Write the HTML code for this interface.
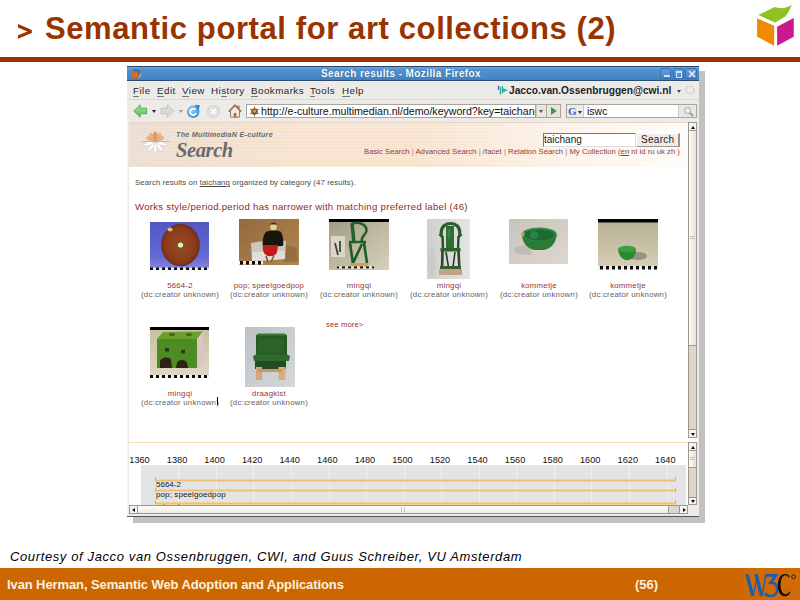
<!DOCTYPE html>
<html><head><meta charset="utf-8">
<style>
*{margin:0;padding:0;box-sizing:border-box}
html,body{width:800px;height:600px;overflow:hidden;background:#fff;font-family:"Liberation Sans",sans-serif}
.abs{position:absolute}
#title{position:absolute;left:45px;top:10.6px;font-size:31px;font-weight:bold;color:#993300;white-space:nowrap;line-height:36px;letter-spacing:0.6px}
#gt{position:absolute;left:18px;top:20px;font-size:20px;font-weight:bold;color:#993300}
#rule{position:absolute;left:0;top:57px;width:800px;height:4.6px;background:#993300}
#footer{position:absolute;left:0;top:568px;width:800px;height:32px;background:#cc6600}
#ftxt{position:absolute;left:7px;top:577px;font-size:13px;font-weight:bold;color:#fdf0dc;white-space:nowrap;letter-spacing:-0.1px}
#fnum{position:absolute;left:635px;top:577px;font-size:13px;font-weight:bold;color:#fdf0dc}
#court{position:absolute;left:10px;top:549px;font-size:13px;font-style:italic;color:#000;white-space:nowrap;letter-spacing:0.62px}
#shadow{position:absolute;left:133px;top:71px;width:572px;height:451.5px;background:#c1c1c1}
#win{position:absolute;left:127px;top:66px;width:572px;height:450px;background:#edebe8;overflow:hidden}
.wbtn{position:absolute;top:2px;width:11px;height:11px;border:1px solid #3a6eae;border-radius:2px;background:linear-gradient(#5e9ade,#4a88d0)}
.menu{position:absolute;top:19px;font-size:9.8px;color:#262626;line-height:12px;white-space:nowrap;letter-spacing:0.45px}
.menu u{text-decoration:none;border-bottom:1px solid #777}
.tri{position:absolute;width:0;height:0;border-left:2px solid transparent;border-right:2px solid transparent;border-top:3px solid #222}
.sep{color:#888}
.cap{position:absolute;text-align:center;font-size:7.8px;line-height:8.6px;color:#626262;white-space:nowrap;letter-spacing:0.24px}
.cap b{font-weight:normal;color:#983434}
.tnum{position:absolute;top:455px;width:30px;text-align:center;font-size:9.2px;color:#111;line-height:11px;}
.tbar{position:absolute;left:155px;width:521px;height:3px;background:linear-gradient(#f5dcaa,#efc070 50%,#f5dcaa)}
.tick{position:absolute;width:1px;height:4px;background:#e8b050}
</style></head><body>
<svg class="abs" style="left:0;top:0" width="40" height="50"><path d="M18,24 L31.8,30 L31.8,33 L18,38.8 L18,35.3 L27.5,31.5 L18,27.5Z" fill="#993300"/></svg>
<div id="title">Semantic portal for art collections (2)</div>
<div id="rule"></div>
<svg class="abs" style="left:750px;top:0" width="50" height="50" viewBox="750 0 50 50">
<path d="M758.3,15 L775,7.1 C779,8.5 786,9.5 791.7,4.6 C790,10 787,15 785,16.7 L775,22.5 Z" fill="#8dc21f"/>
<path d="M757.1,18.3 L774.2,25.8 L774.2,45.8 L757.1,36.7 Z" fill="#f08a00"/>
<path d="M777.1,26.7 L793.75,17.9 L793.75,36.7 L777.1,45.8 Z" fill="#c8198f"/>
</svg>

<div id="shadow"></div>
<div id="win">
 <!-- title bar -->
 <div class="abs" style="left:0;top:0;width:572px;height:15px;background:linear-gradient(#6aa2dc 0px,#6aa2dc 1px,#4f94d4 2px,#4688c8 10px,#4080bc);border-top:1px solid #2a4466;border-bottom:1px solid #2e4c72"></div>
 <svg class="abs" style="left:3px;top:2px" width="12" height="12" viewBox="0 0 12 12"><circle cx="6" cy="6" r="5" fill="#e06a1a"/><path d="M6,1 A5,5 0 0 1 11,6 A5,5 0 0 1 6,11 C9,9 9,4 6,3 C4,3 3,4 3,5 C2,3 4,1 6,1Z" fill="#3a6fb8"/><path d="M10.5,4 A5,5 0 0 1 7,10.8 C9,9 10,7 10.5,4Z" fill="#f2c23a"/></svg>
 <div class="abs" style="left:194px;top:1px;font-size:10px;font-weight:bold;color:#fff;letter-spacing:0.4px;white-space:nowrap;text-shadow:0 0 1px #23466e;line-height:14px">Search results - Mozilla Firefox</div>
 <div class="abs wbtn" style="left:533px"><div style="position:absolute;left:3px;top:5.5px;width:6px;height:2px;background:#cfe3fa"></div></div>
 <div class="abs wbtn" style="left:546px"><div style="position:absolute;left:1.5px;top:2px;width:6.5px;height:6.5px;border:1px solid #cfe3fa;border-top-width:2px"></div></div>
 <div class="abs wbtn" style="left:558px;width:12px"><svg style="position:absolute;left:2px;top:1px" width="8" height="8" viewBox="0 0 8 8"><path d="M1,1 L7,7 M7,1 L1,7" stroke="#e6f0fb" stroke-width="1.6"/></svg></div>
 <!-- menubar -->
 <div class="abs" style="left:0;top:15px;width:572px;height:19px;background:#edebe8;border-bottom:1px solid #dcd8d2"></div>
 <div class="menu" style="left:6px"><u>F</u>ile</div>
 <div class="abs menu" style="left:30px"><u>E</u>dit</div>
 <div class="abs menu" style="left:55px"><u>V</u>iew</div>
 <div class="abs menu" style="left:84px">Hi<u>s</u>tory</div>
 <div class="abs menu" style="left:124px"><u>B</u>ookmarks</div>
 <div class="abs menu" style="left:183px"><u>T</u>ools</div>
 <div class="abs menu" style="left:215px"><u>H</u>elp</div>
 <svg class="abs" style="left:370px;top:19px" width="12" height="10" viewBox="0 0 12 10"><path d="M1.5,0.5 L1.5,5" stroke="#4a6ac8" stroke-width="1.4"/><path d="M3.5,2 L3.5,9.5" stroke="#3ab86a" stroke-width="1.6"/><path d="M5.5,1 L5.5,8" stroke="#2aa0a0" stroke-width="1.2"/><path d="M5,3 L11,5 L5,8Z" fill="#28b4b4"/></svg>
 <div class="abs" style="left:382px;top:19px;font-size:10.2px;font-weight:bold;color:#1e1e1e;white-space:nowrap;line-height:12px">Jacco.van.Ossenbruggen@cwi.nl</div>
 <div class="abs" style="left:550px;top:24px;width:0;height:0;border-left:2px solid transparent;border-right:2px solid transparent;border-top:3px solid #444"></div>
 <svg class="abs" style="left:557px;top:18px" width="12" height="12" viewBox="0 0 12 12"><circle cx="6" cy="6" r="4" fill="none" stroke="#c8c6c2" stroke-width="1.2" stroke-dasharray="1.5 1"/></svg>
 <!-- toolbar -->
 <div class="abs" style="left:0;top:34px;width:572px;height:22px;background:#edebe8;border-bottom:1px solid #e2ded8"></div>
 <svg class="abs" style="left:6px;top:38px" width="15" height="14" viewBox="0 0 15 14"><defs><linearGradient id="bk" x1="0" y1="0" x2="0" y2="1"><stop offset="0" stop-color="#a6e49c"/><stop offset="1" stop-color="#5cbc58"/></linearGradient></defs><path d="M0.8,7 L7.2,0.8 L7.2,4.2 L13.6,4.2 L13.6,9.8 L7.2,9.8 L7.2,13.2 Z" fill="url(#bk)" stroke="#48a048" stroke-width="0.8" stroke-linejoin="round"/></svg>
 <div class="abs tri" style="left:25px;top:44px"></div>
 <svg class="abs" style="left:33px;top:38px" width="15" height="14" viewBox="0 0 15 14"><path d="M13.8,7 L7.4,0.8 L7.4,4.2 L1,4.2 L1,9.8 L7.4,9.8 L7.4,13.2 Z" fill="#dadada" stroke="#c0c0c0" stroke-width="0.8" stroke-linejoin="round"/></svg>
 <div class="abs tri" style="left:52px;top:44px;border-top-color:#999"></div>
 <svg class="abs" style="left:59px;top:38px" width="15" height="15" viewBox="0 0 15 15"><defs><radialGradient id="rl" cx="0.4" cy="0.35" r="0.7"><stop offset="0" stop-color="#9ad0f6"/><stop offset="1" stop-color="#3a8ad8"/></radialGradient></defs><circle cx="7.2" cy="7.8" r="6.2" fill="url(#rl)"/><path d="M9.6,5.6 A3.2,3.2 0 1 0 10.2,9.2" fill="none" stroke="#fff" stroke-width="1.7"/><path d="M8.5,0.8 L14,1.2 L12.6,6.4Z" fill="#3a88d4"/></svg>
 <svg class="abs" style="left:80px;top:39px" width="13" height="13" viewBox="0 0 13 13"><circle cx="6.5" cy="6.5" r="6" fill="#e1e1e1" stroke="#cfcfcf"/><path d="M4,4 L9,9 M9,4 L4,9" stroke="#fff" stroke-width="1.5"/></svg>
 <svg class="abs" style="left:101px;top:38px" width="14" height="14" viewBox="0 0 14 14"><rect x="9.5" y="1.5" width="2" height="4" fill="#9a8070"/><path d="M2.5,7 L2.5,13.2 L11.5,13.2 L11.5,7" fill="#f0e6da" stroke="#8a7468" stroke-width="0.9"/><path d="M0.8,7.6 L7,1.2 L13.2,7.6" fill="none" stroke="#a06a4a" stroke-width="1.6"/><rect x="5.8" y="9" width="2.6" height="4.2" fill="#b86a48"/></svg>
 <div class="abs" style="left:119px;top:38px;width:290px;height:14px;background:#fff;border:1px solid #a9a59d;overflow:hidden">
   <svg class="abs" style="left:2px;top:1px" width="11" height="11" viewBox="0 0 11 11"><circle cx="5.5" cy="5.5" r="3.2" fill="#6d4a2a"/><path d="M1,3 L10,8 M1,8 L10,3 M5.5,0.5 L5.5,10.5" stroke="#8a6a40" stroke-width="1"/><circle cx="5.5" cy="5" r="1.5" fill="#e8a040"/></svg>
   <div class="abs" style="left:14px;top:0px;font-size:10.6px;color:#111;white-space:nowrap;line-height:13px">http://e-culture.multimedian.nl/demo/keyword?key=taichang</div>
 </div>
 <div class="abs" style="left:409px;top:38px;width:11px;height:14px;background:#e9e6e1;border:1px solid #a9a59d;border-left:1px solid #cfcbc4"><div class="tri" style="position:absolute;left:2px;top:5px;border-top-color:#555"></div></div>
 <div class="abs" style="left:420px;top:38px;width:14px;height:14px;background:#e9e6e1;border:1px solid #a9a59d;border-left:none"><div style="position:absolute;left:4px;top:2px;width:0;height:0;border-top:4px solid transparent;border-bottom:4px solid transparent;border-left:6px solid #3aa03a"></div></div>
 <div class="abs" style="left:439px;top:38px;width:131px;height:14px;background:#fff;border:1px solid #a9a59d;overflow:hidden">
   <div class="abs" style="left:0;top:0;width:17px;height:12px;background:#efece8;border-right:1px solid #cfcbc4"></div>
   <div class="abs" style="left:1px;top:0px;font-size:11px;font-weight:bold;color:#3461c0;font-family:'Liberation Serif',serif;line-height:12px">G</div>
   <div class="tri" style="position:absolute;left:11px;top:6px;border-top-color:#333"></div>
   <div class="abs" style="left:20px;top:0px;font-size:10.5px;color:#111;line-height:13px">iswc</div>
   <div class="abs" style="left:111px;top:0;width:19px;height:12px;background:#ebe8e3;border-left:1px solid #cfcbc4"><svg style="position:absolute;left:4px;top:1px" width="11" height="11" viewBox="0 0 11 11"><circle cx="4.5" cy="4.5" r="3" fill="#e8f0fa" stroke="#9aa4b0" stroke-width="1"/><path d="M7,7 L10,10" stroke="#999" stroke-width="1.8"/></svg></div>
 </div>
 <!-- content -->
 <div class="abs" style="left:0;top:55px;width:572px;height:395px;background:#edebe8"></div>
 <div class="abs" id="page" style="left:1px;top:56px;width:560px;height:317px;background:#fff;overflow:hidden;border-left:1px solid #e7dfd8"></div>
 <div class="abs" style="left:1px;top:372px;width:560px;height:4px;background:#fff"></div>
 <div class="abs" id="tl" style="left:1px;top:376px;width:560px;height:63px;background:#fff;overflow:hidden;border-left:1px solid #e7dfd8"></div>
</div>


<!-- page content (page coords) -->
<svg class="abs" style="left:0;top:0" width="800" height="600" viewBox="0 0 800 600">
<defs>
 <filter id="bl" x="-10%" y="-10%" width="120%" height="120%"><feGaussianBlur stdDeviation="0.45"/></filter>
 <linearGradient id="g1" x1="0" y1="0" x2="0" y2="1"><stop offset="0" stop-color="#5257c4"/><stop offset="0.7" stop-color="#6468d2"/><stop offset="1" stop-color="#8387e0"/></linearGradient>
 <radialGradient id="disc" cx="0.5" cy="0.5" r="0.5"><stop offset="0" stop-color="#9a4a24"/><stop offset="0.75" stop-color="#8c3c1c"/><stop offset="0.95" stop-color="#7a3018"/><stop offset="1" stop-color="#5a2a40"/></radialGradient>
 <linearGradient id="g2" x1="0" y1="0" x2="1" y2="1"><stop offset="0" stop-color="#946a3c"/><stop offset="1" stop-color="#b08652"/></linearGradient>
 <linearGradient id="g3" x1="0" y1="0" x2="1" y2="1"><stop offset="0" stop-color="#9e9a84"/><stop offset="0.5" stop-color="#bcb8a2"/><stop offset="1" stop-color="#d6d0bc"/></linearGradient>
 <linearGradient id="g4" x1="0" y1="0" x2="1" y2="0"><stop offset="0" stop-color="#cfcfcd"/><stop offset="1" stop-color="#e4e4e2"/></linearGradient>
 <linearGradient id="g5" x1="0" y1="0" x2="1" y2="1"><stop offset="0" stop-color="#c8c4bc"/><stop offset="1" stop-color="#dcd8d0"/></linearGradient>
 <linearGradient id="g6" x1="0" y1="0" x2="0" y2="1"><stop offset="0" stop-color="#b8b094"/><stop offset="1" stop-color="#d6cfb6"/></linearGradient>
 <linearGradient id="g7" x1="0" y1="0" x2="0" y2="1"><stop offset="0" stop-color="#c8bfa0"/><stop offset="1" stop-color="#e0d8c4"/></linearGradient>
 <linearGradient id="g8" x1="0" y1="0" x2="1" y2="1"><stop offset="0" stop-color="#bcc2c6"/><stop offset="1" stop-color="#d6d8da"/></linearGradient>
 <pattern id="chk" x="0" y="0" width="6" height="3" patternUnits="userSpaceOnUse"><rect width="3" height="3" fill="#111"/><rect x="3" width="3" height="3" fill="#eee"/></pattern>
</defs>
<g filter="url(#bl)">
 <!-- 1: disc -->
 <rect x="150" y="222" width="59" height="48" fill="url(#g1)"/>
 <ellipse cx="180.5" cy="245" rx="19.3" ry="21.3" fill="url(#disc)"/>
 <circle cx="180.5" cy="245" r="4.2" fill="#6a5a28"/>
 <circle cx="180.5" cy="245" r="2.6" fill="#f4eca8"/>
 <ellipse cx="170" cy="229.5" rx="2.6" ry="2" fill="#e8b878"/>
 <rect x="150" y="267.5" width="59" height="2.5" fill="url(#chk)"/>
 <!-- 2: doll -->
 <rect x="239" y="219" width="60" height="46" fill="url(#g2)"/>
 <path d="M284,244 L297,248 L298,262 L284,262Z" fill="#7a5a34" opacity="0.45"/>
 <path d="M251,243 C262,241 276,240 286,241 L285,259 C275,260 262,261 252,261Z" fill="#d4d0ca" opacity="0.9"/>
 <path d="M252,252 L285,251 L285,259 L252,261Z" fill="#e6e2de" opacity="0.8"/>
 <ellipse cx="273.5" cy="227" rx="3.3" ry="3.8" fill="#e4d098"/>
 <path d="M270,224.5 C271,222 276,222 277,224.5Z" fill="#3a2a1a"/>
 <path d="M266,232 C270,230 278,230 281,232 C283,236 284,242 283,246 L263,247 C262,242 263,235 266,232Z" fill="#181210"/>
 <path d="M263,245 C262,250 264,255 268,256 C271,256.5 276,256 277,252 L278,245Z" fill="#c01a1a"/>
 <path d="M266,256 L268,262 M274,255.5 L271,262" stroke="#7a5a3a" stroke-width="1.6"/>
 <rect x="239" y="261" width="24" height="3.5" fill="url(#chk)"/>
 <!-- 3: chair with card -->
 <rect x="329" y="219" width="60" height="51" fill="url(#g3)"/>
 <rect x="329" y="219" width="60" height="3" fill="#050505"/>
 <rect x="331" y="236" width="14" height="21" fill="#ddd6c8"/>
 <path d="M335,243 L338,255 M340,241 L340,252" stroke="#3a4a3a" stroke-width="1.8"/>
 <path d="M352,224 C358,221 367,224 366.5,231 C365,236 361,236 361.5,242" stroke="#24602a" stroke-width="2.6" fill="none"/>
 <path d="M352,223 L354,243" stroke="#24602a" stroke-width="3.5"/>
 <path d="M349,242 L366,242" stroke="#24602a" stroke-width="2.5"/>
 <path d="M350,243 L353,264 M364,243 L367,263 M353,263 L362,244" stroke="#1f5a26" stroke-width="2.6" fill="none"/>
 <path d="M350,263 L369,263 L367,267 L351,267Z" fill="#c8a068"/>
 <rect x="337" y="266.5" width="37" height="1.8" fill="url(#chk)"/>
 <!-- 4: chair -->
 <rect x="427" y="219" width="43" height="60" fill="url(#g4)"/>
 <ellipse cx="432" cy="262" rx="4" ry="14" fill="#c4c4c2" opacity="0.5"/>
 <path d="M441.5,236 C440,226 446,223.5 450.5,223.5 C455,223.5 461,226 459.5,236" stroke="#2a5e2c" stroke-width="3.2" fill="none"/>
 <path d="M439.5,234 L442,237 M461.5,234 L459,237" stroke="#2a5e2c" stroke-width="2.5"/>
 <rect x="446" y="226" width="8" height="22" fill="#2e6e32"/>
 <rect x="447.5" y="229" width="3" height="10" fill="#4a8a50" opacity="0.6"/>
 <path d="M442.5,236 L443,250 M458.5,236 L458,250" stroke="#244e26" stroke-width="2.4"/>
 <rect x="440.5" y="248" width="20" height="3.5" fill="#2c642e"/>
 <path d="M442.5,251 L442,271 M458.5,251 L459.5,271" stroke="#244e26" stroke-width="2.6"/>
 <path d="M446,252 L448.5,267 M455,252 L453,267" stroke="#2a3a22" stroke-width="1.6"/>
 <rect x="440" y="266" width="21" height="3" fill="#3a5a30"/>
 <rect x="439" y="269" width="23" height="6" fill="#c0a488"/>
 <!-- 5: bowl -->
 <rect x="509" y="219" width="59" height="45" fill="url(#g5)"/>
 <ellipse cx="528" cy="250" rx="14" ry="5" fill="#b4b0a8" opacity="0.6"/>
 <path d="M521.8,234 C522,245 530,250.5 539,250.5 C549,250.5 556,245 556.8,234Z" fill="#2a7a38"/>
 <ellipse cx="539.3" cy="234.5" rx="17.5" ry="7" fill="#2e8a40"/>
 <ellipse cx="539.5" cy="235" rx="15" ry="5.5" fill="#1f6a30"/>
 <ellipse cx="534" cy="235" rx="4" ry="4" fill="#3aa070" opacity="0.45"/>
 <path d="M531,250 L548,250 L547,254 L532,254Z" fill="#ddd0bc"/>
 <ellipse cx="523" cy="234" rx="1.5" ry="2.5" fill="#d89060"/>
 <!-- 6: small bowl -->
 <rect x="598" y="219" width="60" height="50" fill="url(#g6)"/>
 <rect x="598" y="219" width="60" height="3.5" fill="#050505"/>
 <ellipse cx="638" cy="256" rx="9" ry="4" fill="#8a8478" opacity="0.8"/>
 <path d="M618,249 C619,257 623,260 627,260 C632,260 636,257 636,249Z" fill="#2a8a30"/>
 <ellipse cx="627" cy="249" rx="9" ry="3.2" fill="#3aa040"/>
 <rect x="598" y="266" width="60" height="3.5" fill="url(#chk)"/>
 <!-- 7: green block -->
 <rect x="150" y="327" width="59" height="51" fill="url(#g7)"/>
 <rect x="150" y="327" width="59" height="3" fill="#050505"/>
 <path d="M157,339 L163,332 L203,331.5 L197,339Z" fill="#6aa02e"/>
 <rect x="157" y="339" width="40" height="29" fill="#4e8c24"/>
 <path d="M197,339 L203,331.5 L203,364 L197,368Z" fill="#dcc4c4"/>
 <path d="M160,368 L160,362 C160,357 170,356 171,360 L172,368Z" fill="#2e2416"/>
 <path d="M176,368 L177,363 C178,359 186,359 187,363 L188,368Z" fill="#2e2416"/>
 <rect x="165" y="348" width="4" height="3.5" fill="#2a3a1a"/><rect x="181" y="350" width="4" height="3.5" fill="#2a3a1a"/>
 <ellipse cx="172" cy="334.5" rx="3" ry="1.5" fill="#3a6a1a"/><ellipse cx="189" cy="334.5" rx="3" ry="1.5" fill="#3a6a1a"/>
 <rect x="150" y="375" width="59" height="3" fill="url(#chk)"/>
 <!-- 8: draagkist -->
 <rect x="245" y="327" width="50" height="60" fill="url(#g8)"/>
 <rect x="256" y="335" width="31" height="22" fill="#255a24"/>
 <path d="M256,335.5 L258,333.5 L285,333.5 L287,335.5Z" fill="#3a7a34"/>
 <rect x="258" y="339" width="26" height="14" fill="#2e6a2a" opacity="0.6"/>
 <path d="M253,356 L256,354.5 L287,354.5 L290,356 L289,361 L254,361Z" fill="#2f6a2a"/>
 <rect x="255" y="361" width="31" height="8" fill="#234e20"/>
 <rect x="256" y="367" width="6" height="13" fill="#d4a878"/>
 <rect x="278.5" y="367" width="7" height="13" fill="#d8b080"/>
 <rect x="258" y="369" width="24" height="3" fill="#c89868"/>
</g>
</svg>

<div class="abs" style="left:129px;top:122px;width:559px;height:45px;background:linear-gradient(90deg,rgba(214,214,214,.35) 0%,rgba(230,230,230,0) 30%,rgba(255,255,255,0) 50%,rgba(255,255,255,.65) 82%,rgba(255,255,255,.88) 100%),repeating-linear-gradient(180deg,#f6e0ca 0px,#f6e0ca 1.15px,#f9e8d8 1.15px,#f9e8d8 2.3px),#f6e0ca;border-top:1px solid #ecd6c2"></div>
<svg class="abs" style="left:140px;top:128px" width="32" height="30" viewBox="0 0 32 30">
 <g transform="translate(15.2,13.5)">
  <path d="M-13,0 L14,0" stroke="#b8b0a8" stroke-width="0.8"/>
  <g fill="#fbfbfb" stroke="#bdbdbd" stroke-width="0.45"><ellipse cx="0" cy="6.5" rx="1.9" ry="5.8" transform="rotate(-72)"/><ellipse cx="0" cy="6.5" rx="1.9" ry="5.8" transform="rotate(-36)"/><ellipse cx="0" cy="6.5" rx="1.9" ry="5.8" transform="rotate(0)"/><ellipse cx="0" cy="6.5" rx="1.9" ry="5.8" transform="rotate(36)"/><ellipse cx="0" cy="6.5" rx="1.9" ry="5.8" transform="rotate(72)"/></g>
  <g fill="#e6b482" stroke="#d09a68" stroke-width="0.4"><ellipse cx="0" cy="-5" rx="1.9" ry="4.6" transform="rotate(-64)"/><ellipse cx="0" cy="-5" rx="1.9" ry="4.6" transform="rotate(-32)"/><ellipse cx="0" cy="-5" rx="1.9" ry="4.6" transform="rotate(0)"/><ellipse cx="0" cy="-5" rx="1.9" ry="4.6" transform="rotate(32)"/><ellipse cx="0" cy="-5" rx="1.9" ry="4.6" transform="rotate(64)"/></g>
  <ellipse cx="0" cy="-5.5" rx="1.8" ry="4.6" fill="#d8986a"/>
 </g>
</svg>
<div class="abs" style="left:176px;top:130px;font-size:7.2px;font-weight:bold;font-style:italic;color:#6a6a6a;white-space:nowrap;line-height:9px;letter-spacing:0.25px;font-family:'Liberation Sans',sans-serif">The MultimediaN E-culture</div>
<div class="abs" style="left:176px;top:139.5px;font-size:20.5px;font-weight:bold;font-style:italic;color:#6a6a6a;white-space:nowrap;line-height:20px;font-family:'Liberation Serif',serif;letter-spacing:-0.4px">Search</div>
<div class="abs" style="left:543px;top:133px;width:93px;height:14px;background:#fff;border-top:1px solid #777;border-left:1px solid #777;border-right:1px solid #ddd;border-bottom:1px solid #ddd"></div>
<div class="abs" style="left:544px;top:133px;font-size:10px;color:#222;line-height:14px">taichang</div>
<div class="abs" style="left:636px;top:133px;width:44px;height:14px;background:#efede9;border-right:2px solid #9a968e;border-bottom:1px solid #9a968e;border-top:1px solid #fff;border-left:1px solid #fff"></div>
<div class="abs" style="left:641px;top:133px;font-size:10px;color:#222;line-height:14px;letter-spacing:0.3px">Search</div>
<div class="abs" style="left:364px;top:147px;font-size:7.74px;color:#964040;line-height:10px;white-space:nowrap;letter-spacing:0px">Basic Search <span class="sep">|</span> Advanced Search <span class="sep">|</span> /facet <span class="sep">|</span> Relation Search <span class="sep">|</span> My Collection <span style="color:#964040">(<u>en</u> nl id ru uk zh )</span></div>

<div class="abs" style="left:135px;top:178px;font-size:7.85px;color:#4a4a4a;line-height:10px;white-space:nowrap;letter-spacing:0.08px">Search results on <u>taichang</u> organized by category (47 results).</div>
<div class="abs" style="left:135px;top:201px;font-size:9.6px;color:#8e2a2a;line-height:12px;white-space:nowrap;letter-spacing:0.28px">Works style/period.period has narrower with matching preferred label (46)</div>

<div class="cap" style="left:130px;top:282px;width:100px"><b>5664-2</b><br>(dc:creator unknown)</div>
<div class="cap" style="left:219px;top:282px;width:100px"><b>pop; speelgoedpop</b><br>(dc:creator unknown)</div>
<div class="cap" style="left:309px;top:282px;width:100px"><b>mingqi</b><br>(dc:creator unknown)</div>
<div class="cap" style="left:399px;top:282px;width:100px"><b>mingqi</b><br>(dc:creator unknown)</div>
<div class="cap" style="left:489px;top:282px;width:100px"><b>kommetje</b><br>(dc:creator unknown)</div>
<div class="cap" style="left:578px;top:282px;width:100px"><b>kommetje</b><br>(dc:creator unknown)</div>
<div class="cap" style="left:130px;top:390px;width:100px"><b>mingqi</b><br>(dc:creator unknown)</div>
<div class="cap" style="left:219px;top:390px;width:100px"><b>draagkist</b><br>(dc:creator unknown)</div>
<div class="abs" style="left:217px;top:397px;width:1px;height:8px;background:#000"></div>
<div class="abs" style="left:326px;top:320px;font-size:7.7px;color:#983434;line-height:9px;white-space:nowrap;letter-spacing:0.1px">see more&gt;</div>

<!-- upper scrollbar -->
<div class="abs" style="left:688px;top:122px;width:9px;height:316px;background:#dcd6cc;border:1px solid #9d978d"></div>
<div class="abs" style="left:689px;top:131px;width:7px;height:215px;background:linear-gradient(90deg,#fdfcf8,#e8e0d8);border-bottom:1px solid #9d978d"></div>
<div class="abs" style="left:689px;top:123px;width:7px;height:8px;background:#f6f4f0;border-bottom:1px solid #9d978d"></div>
<div class="abs" style="left:690.5px;top:125.5px;width:0;height:0;border-left:2px solid transparent;border-right:2px solid transparent;border-bottom:3px solid #111"></div>
<div class="abs" style="left:690px;top:236px;width:5px;height:3px;border-top:1px solid #c8c2b8;border-bottom:1px solid #c8c2b8"></div>
<div class="abs" style="left:689px;top:429px;width:7px;height:8px;background:#f6f4f0;border-top:1px solid #9d978d"></div>
<div class="abs" style="left:690.5px;top:432.5px;width:0;height:0;border-left:2px solid transparent;border-right:2px solid transparent;border-top:3px solid #111"></div>
<!-- frame gap -->
<div class="abs" style="left:129px;top:438px;width:569px;height:4px;background:#fff"></div>
<div class="abs" style="left:127px;top:122px;width:1px;height:392px;background:#f7f7f5"></div>
<div class="abs" style="left:128px;top:122px;width:1px;height:383px;background:#ebe9e6"></div>
<div class="abs" style="left:129px;top:442px;width:559px;height:1px;background:#f3dcb6"></div>
<!-- timeline -->
<div class="abs" style="left:140.7px;top:465px;width:545.3px;height:40px;background:#e4e4e4"></div>
<div class="abs" style="left:178.3px;top:465px;width:1px;height:40px;background:#f2f2f2"></div><div class="abs" style="left:215.8px;top:465px;width:1px;height:40px;background:#f2f2f2"></div><div class="abs" style="left:253.4px;top:465px;width:1px;height:40px;background:#f2f2f2"></div><div class="abs" style="left:290.9px;top:465px;width:1px;height:40px;background:#f2f2f2"></div><div class="abs" style="left:328.5px;top:465px;width:1px;height:40px;background:#f2f2f2"></div><div class="abs" style="left:366.1px;top:465px;width:1px;height:40px;background:#f2f2f2"></div><div class="abs" style="left:403.6px;top:465px;width:1px;height:40px;background:#f2f2f2"></div><div class="abs" style="left:441.2px;top:465px;width:1px;height:40px;background:#f2f2f2"></div><div class="abs" style="left:478.7px;top:465px;width:1px;height:40px;background:#f2f2f2"></div><div class="abs" style="left:516.3px;top:465px;width:1px;height:40px;background:#f2f2f2"></div><div class="abs" style="left:553.9px;top:465px;width:1px;height:40px;background:#f2f2f2"></div><div class="abs" style="left:591.4px;top:465px;width:1px;height:40px;background:#f2f2f2"></div><div class="abs" style="left:629.0px;top:465px;width:1px;height:40px;background:#f2f2f2"></div><div class="abs" style="left:666.5px;top:465px;width:1px;height:40px;background:#f2f2f2"></div><div class="tnum" style="left:124.5px">1360</div><div class="tnum" style="left:162.1px">1380</div><div class="tnum" style="left:199.6px">1400</div><div class="tnum" style="left:237.2px">1420</div><div class="tnum" style="left:274.7px">1440</div><div class="tnum" style="left:312.3px">1460</div><div class="tnum" style="left:349.9px">1480</div><div class="tnum" style="left:387.4px">1500</div><div class="tnum" style="left:425.0px">1520</div><div class="tnum" style="left:462.5px">1540</div><div class="tnum" style="left:500.1px">1560</div><div class="tnum" style="left:537.7px">1580</div><div class="tnum" style="left:575.2px">1600</div><div class="tnum" style="left:612.8px">1620</div><div class="tnum" style="left:650.3px">1640</div>
<div class="tbar" style="top:478.5px"></div><div class="tick" style="left:155px;top:477px"></div><div class="tick" style="left:675px;top:477px"></div>
<div class="tbar" style="top:489.3px"></div><div class="tick" style="left:155px;top:488px"></div><div class="tick" style="left:675px;top:488px"></div>
<div class="tbar" style="top:501.5px"></div><div class="tick" style="left:155px;top:500px"></div><div class="tick" style="left:675px;top:500px"></div>
<div class="abs" style="left:156px;top:479.5px;font-size:8px;color:#1a1a1a;line-height:9px">5664-2</div>
<div class="abs" style="left:156px;top:490px;font-size:8px;color:#1a1a1a;line-height:9px;letter-spacing:0.1px">pop; speelgoedpop</div>
<div class="abs" style="left:156px;top:502px;font-size:8px;color:#1a1a1a;line-height:9px;height:3px;overflow:hidden">mingqi</div>
<!-- lower scrollbar -->
<div class="abs" style="left:688px;top:442px;width:9px;height:63px;background:#dcd6cc;border:1px solid #9d978d"></div>
<div class="abs" style="left:689px;top:443px;width:7px;height:8px;background:#f6f4f0;border-bottom:1px solid #9d978d"></div>
<div class="abs" style="left:690.5px;top:445.5px;width:0;height:0;border-left:2px solid transparent;border-right:2px solid transparent;border-bottom:3px solid #111"></div>
<div class="abs" style="left:689px;top:451px;width:7px;height:17px;background:linear-gradient(90deg,#fdfcf8,#e8e0d8);border-bottom:1px solid #9d978d"></div>
<div class="abs" style="left:690px;top:457px;width:5px;height:3px;border-top:1px solid #c8c2b8;border-bottom:1px solid #c8c2b8"></div>
<div class="abs" style="left:689px;top:497px;width:7px;height:7px;background:#f6f4f0;border-top:1px solid #9d978d"></div>
<div class="abs" style="left:690.5px;top:500px;width:0;height:0;border-left:2px solid transparent;border-right:2px solid transparent;border-top:3px solid #111"></div>
<!-- h scrollbar -->
<div class="abs" style="left:129px;top:505px;width:559px;height:9px;background:#dcd6cc;border:1px solid #9d978d"></div>
<div class="abs" style="left:137px;top:506px;width:532px;height:7px;background:linear-gradient(#fdfcfa,#efebe5);border-left:1px solid #9d978d;border-right:1px solid #9d978d"></div>
<div class="abs" style="left:130px;top:506px;width:7px;height:7px;background:#f6f4f0"></div>
<div class="abs" style="left:132px;top:507.5px;width:0;height:0;border-top:2px solid transparent;border-bottom:2px solid transparent;border-right:3px solid #111"></div>
<div class="abs" style="left:401px;top:507px;width:4px;height:5px;border-left:1px solid #c8c2b8;border-right:1px solid #c8c2b8"></div>
<div class="abs" style="left:679px;top:506px;width:8px;height:7px;background:#f6f4f0;border-left:1px solid #9d978d"></div>
<div class="abs" style="left:682.5px;top:507.5px;width:0;height:0;border-top:2px solid transparent;border-bottom:2px solid transparent;border-left:3px solid #111"></div>
<div class="abs" style="left:688px;top:505px;width:9px;height:9px;background:#edebe8"></div>
<!-- window bottom -->
<div class="abs" style="left:127px;top:514px;width:572px;height:2px;background:#edebe8"></div>
<div class="abs" style="left:127px;top:516px;width:572px;height:1px;background:#555"></div>
<div id="court">Courtesy of Jacco van Ossenbruggen, CWI, and Guus Schreiber, VU Amsterdam</div>
<div id="footer"></div>
<div id="ftxt">Ivan Herman, Semantic Web Adoption and Applications</div>
<div id="fnum">(56)</div>
<div class="abs" style="left:743px;top:568px;width:57px;height:32px;background:#cf6a04"></div>
<svg class="abs" style="left:740px;top:568px" width="60" height="32" viewBox="740 568 60 32">
<path d="M745.2,574 L748.6,574 L754.4,596 L751,596Z M754.4,574 L757.8,574 L763.2,596 L759.8,596Z" fill="#1f5cb5"/><path d="M753.2,596 L757.4,574.5 M762.2,596 L765.8,574.5" stroke="#1f5cb5" stroke-width="1.3"/>
<path d="M765.6,575.4 L776.2,575.4 L770.6,582.6 C775,582.4 777.2,585.4 777.2,589.2 C777.2,593.6 774.2,596 770.6,596 C767.8,596 766,594.8 764.8,593.2" fill="none" stroke="#1f5cb5" stroke-width="2.6"/>
<path d="M789.8,576.2 C788.4,574.4 786.4,573.9 784.8,573.9 C780.2,573.9 777.8,579.5 777.8,585.5 C777.8,592 780.6,596.2 785,596.2 C787.6,596.2 789.4,594.6 790.6,592 L789.6,591.4 C788.6,593 787.2,594.2 785.6,594.2 C782.6,594.2 780.6,590.6 780.6,585 C780.6,579 782.8,575.3 785.2,575.3 C786.8,575.3 788,576.2 789,577.4 Z" fill="#140c06"/>
<circle cx="793.6" cy="576.8" r="1.9" fill="none" stroke="#2a1a0a" stroke-width="0.9"/>
</svg>
</body></html>
